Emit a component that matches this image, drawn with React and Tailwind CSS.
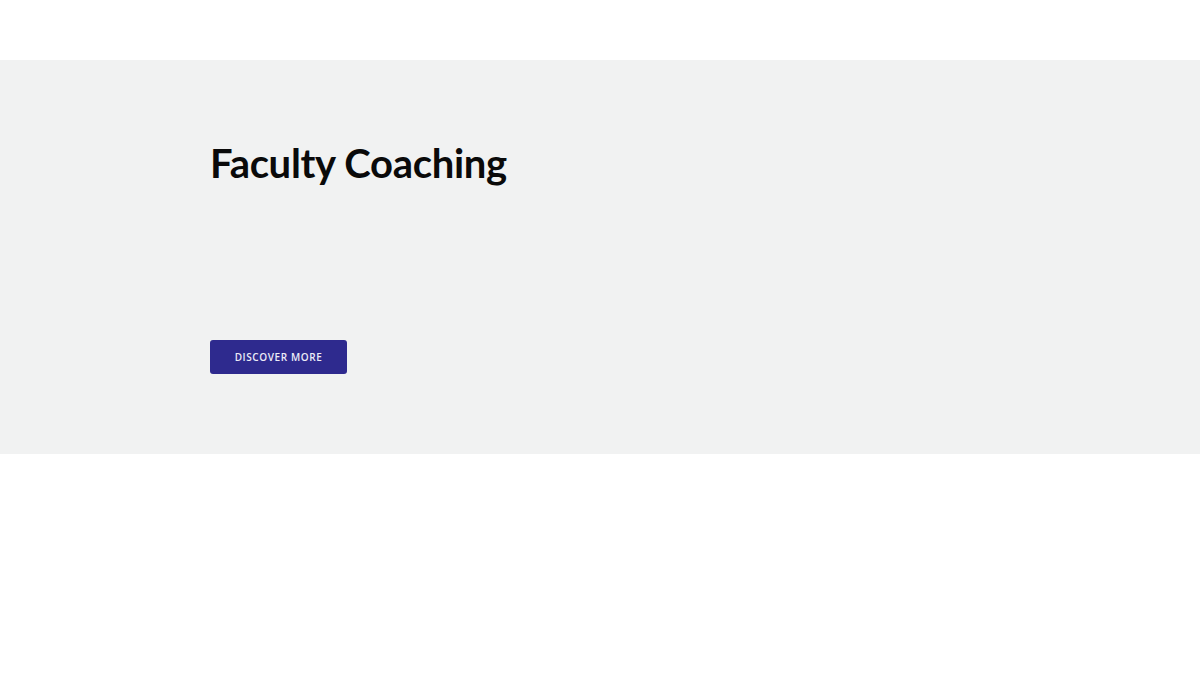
export default function App() {
  return (
    <div className="w-[1200px] h-[675px] bg-white" style={{ fontFamily: "Lato, 'Open Sans', sans-serif" }}>
      <div className="h-[60px]" />
      <section className="h-[394px] bg-[#f1f2f2] pl-[210px] pt-[79px]">
        <h1 className="text-[40px] leading-[48px] font-bold text-[#0a0a0a] tracking-[-0.3px] font-['Lato',sans-serif]">Faculty Coaching</h1>
        <div className="mt-[153px]">
          <button className="w-[137px] h-[34px] rounded-[3px] bg-[#2e2a8e] text-[#ececf7] text-[10px] font-semibold tracking-[0.6px] uppercase font-['Open_Sans',sans-serif]">
            Discover More
          </button>
        </div>
      </section>
    </div>
  );
}
